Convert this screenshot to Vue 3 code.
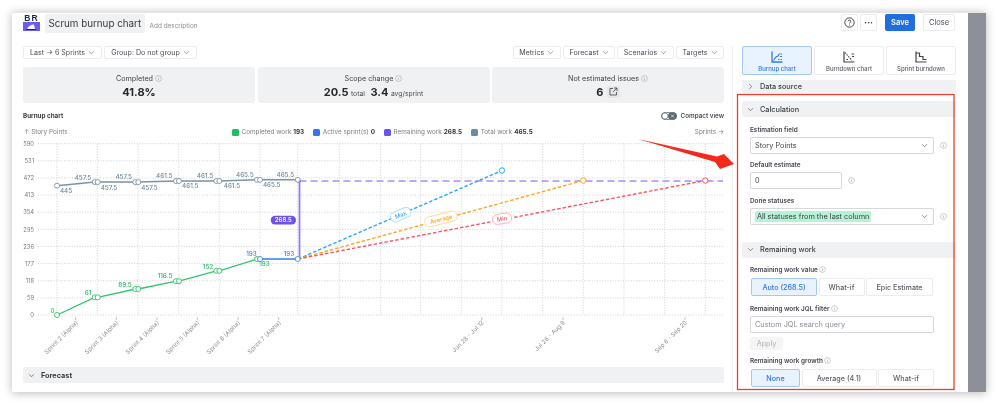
<script setup>
const leftButtons = [{ t: 'Last → 6 Sprints', w: 79 }, { t: 'Group: Do not group', w: 93 }]
const rightButtons = [{ t: 'Metrics', w: 48.5 }, { t: 'Forecast', w: 52 }, { t: 'Scenarios', w: 57 }, { t: 'Targets', w: 48 }]
const legend = [
  { label: 'Completed work', value: '193', color: '#22bd63' },
  { label: 'Active sprint(s)', value: '0', color: '#2f78e8' },
  { label: 'Remaining work', value: '268.5', color: '#6e4ff0' },
  { label: 'Total work', value: '465.5', color: '#6f8a9c' }
]
const yAxis = [590, 531, 472, 413, 354, 295, 236, 177, 118, 59, 0].map((v, i) => ({ v, y: 143.7 + i * 17.13 }))
const gridX = [57, 97.3, 138, 178.7, 219.3, 260, 297.7, 339.3, 380.7, 420.7, 461.3, 502, 542.7, 583.3, 624, 664.7, 705.3]
const sprintTicks = [
  { x: 75.7, t: 'Sprint 2 (Alpha)' }, { x: 116.3, t: 'Sprint 3 (Alpha)' }, { x: 157, t: 'Sprint 4 (Alpha)' },
  { x: 197.3, t: 'Sprint 5 (Alpha)' }, { x: 238, t: 'Sprint 6 (Alpha)' }, { x: 278.7, t: 'Sprint 7 (Alpha)' },
  { x: 481.7, t: 'Jun 28 - Jul 12' }, { x: 563, t: 'Jul 26 - Aug 9' }, { x: 685, t: 'Sep 6 - Sep 20' }
]
const pairX = [97.7, 138.3, 179, 219.3, 260]
const greyY = [182.1, 182.1, 181, 181, 179.8]
const greenY = [297.3, 289, 281.2, 270.8, 259]
const greyCircles = [[57, 185.7], ...pairX.flatMap((x, i) => [[x - 3, greyY[i]], [x, greyY[i]]]), [297.7, 179.8]]
const greenCircles = [[57, 315], ...pairX.flatMap((x, i) => (i < 4 ? [[x - 3, greenY[i]], [x, greenY[i]]] : [[x - 3, greenY[i]]]))]
const greyLine = greyCircles.map(p => p.join(',')).join(' ')
const greenLine = greenCircles.map(p => p.join(',')).join(' ')
const greyLabels = [
  [83, 177.5, '457.5'], [123.7, 177, '457.5'], [164.3, 176, '461.5'], [205, 176, '461.5'], [244.8, 174.7, '465.5'], [285.3, 174.7, '465.5'],
  [66, 191, '445'], [109, 187.3, '457.5'], [149.5, 187.3, '457.5'], [190.3, 186, '461.5'], [232, 186, '461.5'], [271.7, 184.7, '465.5']
]
const greenLabels = [[52.5, 310.5, '0'], [88, 292.3, '61'], [125, 284.5, '89.5'], [165, 276, '116.5'], [208, 266.3, '152'], [264.5, 264, '193']]
const forecasts = [
  { x: 502, y: 170.5, color: '#28a7ff', soft: '#a6dcff', label: 'Max', lx: 400.7, ly: 214.7, w: 21, rot: -23 },
  { x: 583.3, y: 180.5, color: '#ffa51f', soft: '#ffd79a', label: 'Average', lx: 441, ly: 219, w: 33, rot: -14 },
  { x: 705.3, y: 180.5, color: '#fb5560', soft: '#ffb0b4', label: 'Min', lx: 502, ly: 218.7, w: 19, rot: -9 }
]
</script>

<template>
  <div class="page">
    <svg class="defs" width="0" height="0" aria-hidden="true">
      <symbol id="chev" viewBox="0 0 10 10"><path d="M1.5 3.2 5 6.8l3.5-3.6" fill="none" stroke="currentColor" stroke-width="1"/></symbol>
      <symbol id="info" viewBox="0 0 10 10"><circle cx="5" cy="5" r="4.2" fill="none" stroke="currentColor" stroke-width=".8"/><path d="M5 4.3v3M5 2.6v.9" stroke="currentColor" stroke-width=".9"/></symbol>
    </svg>

    <div class="window">
      <div class="main">
        <header class="top">
          <div class="logo">
            <span class="logo-text">BR</span>
            <svg class="logo-mark" viewBox="0 0 17 9"><rect width="17" height="9" fill="#6a5cf0"/><path d="M4 7c1-2.500 4-4.500 7-4.500l1 4.500z" fill="#fff"/><rect x="3" y="7" width="10" height="1" fill="#1e2a55"/></svg>
          </div>
          <h1 class="title">Scrum burnup chart</h1>
          <span class="desc">Add description</span>
          <div class="top-actions">
            <button class="icon-btn">
              <svg width="11" height="11" viewBox="0 0 11 11"><circle cx="5.500" cy="5.500" r="4.700" fill="none" stroke="#333" stroke-width=".9"/><path d="M4.200 4.300c0-1.700 2.700-1.700 2.700 0 0 1-1.300 1-1.300 2.100" fill="none" stroke="#333" stroke-width=".9"/><circle cx="5.600" cy="8" r=".55" fill="#333"/></svg>
            </button>
            <button class="icon-btn dots">···</button>
            <button class="save">Save</button>
            <button class="close">Close</button>
          </div>
        </header>

        <div class="body">
          <section class="left">
            <div class="toolbar">
              <button v-for="b in leftButtons" :key="b.t" class="tool" :style="{ width: b.w + 'px' }">{{ b.t }}<svg class="chev"><use href="#chev"/></svg></button>
              <span class="spacer"></span>
              <button v-for="b in rightButtons" :key="b.t" class="tool" :style="{ width: b.w + 'px' }">{{ b.t }}<svg class="chev"><use href="#chev"/></svg></button>
            </div>

            <div class="kpis">
              <div class="kpi">
                <div class="kpi-label">Completed <svg class="info"><use href="#info"/></svg></div>
                <div class="kpi-value"><b>41.8%</b></div>
              </div>
              <div class="kpi">
                <div class="kpi-label">Scope change <svg class="info"><use href="#info"/></svg></div>
                <div class="kpi-value"><b>20.5</b> <small>total</small> <b class="second">3.4</b> <small>avg/sprint</small></div>
              </div>
              <div class="kpi">
                <div class="kpi-label">Not estimated issues <svg class="info"><use href="#info"/></svg></div>
                <div class="kpi-value">
                  <b>6</b>
                  <span class="open">
                    <svg width="9" height="9" viewBox="0 0 9 9"><path d="M4 1.500H1v6.500h6.500V5M5 1h3v3M8 1 4 5" fill="none" stroke="#444" stroke-width=".8"/></svg>
                  </span>
                </div>
              </div>
            </div>

            <div class="chart-head">
              <span class="chart-title">Burnup chart</span>
              <span class="compact">
                <svg width="16" height="8" viewBox="0 0 16 8"><rect x=".4" y=".4" width="15.200" height="7.200" rx="3.600" fill="#fff" stroke="#5d6470" stroke-width=".8"/><rect x="7" y=".4" width="8.600" height="7.200" rx="3.600" fill="#5d6470"/><circle cx="4" cy="4" r="3" fill="#fff" stroke="#5d6470" stroke-width=".6"/><path d="m10 2.500 3 3m0-3-3 3" stroke="#fff" stroke-width=".7"/></svg>
                Compact view
              </span>
            </div>

            <div class="axis-row">
              <span class="axis-left">↑ Story Points</span>
              <span v-for="l in legend" :key="l.label" class="legend">
                <i :style="{ background: l.color }"></i>{{ l.label }} <b>{{ l.value }}</b>
              </span>
              <span class="axis-right">Sprints →</span>
            </div>

            <svg class="chart" viewBox="12 139 712 228" width="712" height="228">
              <g class="grid">
                <line v-for="a in yAxis" :key="a.v" x1="38" x2="724" :y1="a.y" :y2="a.y"/>
                <line v-for="x in gridX" :key="x" :x1="x" :x2="x" y1="143.700" y2="315"/>
              </g>
              <text v-for="a in yAxis" :key="'y' + a.v" class="ylab" x="34" :y="a.y + 2.200">{{ a.v }}</text>

              <g v-for="t in sprintTicks" :key="t.t">
                <line class="tick" :x1="t.x" :x2="t.x" y1="317" y2="320"/>
                <text class="xlab" :transform="`translate(${t.x + 2.5} 323) rotate(-45)`">{{ t.t }}</text>
              </g>

              <polyline :points="greyLine" fill="none" stroke="#7c93a3" stroke-width="1.500"/>
              <polyline :points="greenLine" fill="none" stroke="#33c46c" stroke-width="1.300"/>
              <line x1="260" x2="297.700" y1="259" y2="259" stroke="#639ff2" stroke-width="2"/>

              <line x1="299.500" x2="723" y1="181" y2="181" stroke="#a58df8" stroke-width="1.600" stroke-dasharray="7 4"/>
              <line x1="299.500" x2="299.500" y1="181" y2="258" stroke="#8f7df5" stroke-width="1.800"/>
              <circle cx="299.300" cy="181" r="1.500" fill="#6e4ff0"/>

              <g v-for="f in forecasts" :key="f.label">
                <line x1="298" y1="259" :x2="f.x" :y2="f.y" :stroke="f.color" stroke-width="1.400" stroke-dasharray="3.500 2"/>
                <circle :cx="f.x" :cy="f.y" r="2.700" fill="#fff" :stroke="f.color" stroke-width="1"/>
                <g :transform="`translate(${f.lx} ${f.ly}) rotate(${f.rot})`">
                  <rect :x="-f.w / 2" y="-5" :width="f.w" height="10" rx="4.500" fill="#fff" :stroke="f.soft" stroke-width=".9"/>
                  <text class="fc-label" :fill="f.color" y="2.200">{{ f.label }}</text>
                </g>
              </g>

              <circle v-for="(c, i) in greyCircles" :key="'g' + i" :cx="c[0]" :cy="c[1]" r="2.500" fill="#fff" stroke="#7c93a3" stroke-width=".9"/>
              <circle v-for="(c, i) in greenCircles" :key="'n' + i" :cx="c[0]" :cy="c[1]" r="2.500" fill="#fff" stroke="#2fbe66" stroke-width=".9"/>
              <circle cx="260" cy="259" r="2.500" fill="#fff" stroke="#3f86ee" stroke-width=".9"/>
              <circle cx="297.700" cy="259" r="2.500" fill="#fff" stroke="#3f86ee" stroke-width=".9"/>

              <text v-for="(l, i) in greyLabels" :key="'gl' + i" class="pt grey" :x="l[0]" :y="l[1] + 2.200">{{ l[2] }}</text>
              <text v-for="(l, i) in greenLabels" :key="'nl' + i" class="pt green" :x="l[0]" :y="l[1] + 2.200">{{ l[2] }}</text>
              <text class="pt blue" x="251.500" y="256.200">193</text>
              <text class="pt blue" x="289" y="256.200">193</text>

              <rect x="270.700" y="215.700" width="25.300" height="8.800" rx="4.400" fill="#6e4ff0"/>
              <text class="badge" x="283.300" y="222.300">268.5</text>
            </svg>

            <div class="acc forecast"><svg class="chev dark"><use href="#chev"/></svg>Forecast</div>
          </section>

          <aside class="right">
            <div class="tabs">
              <button class="tab active">
                <svg width="12" height="12" viewBox="0 0 12 12" fill="none" stroke="#2f78e8"><path d="M1 .5V11h10.500" stroke-width="1.300"/><path d="m2.500 9.500 2.500-3.500 2-1 1.500-2.500" stroke-width="1.100"/><path d="M7 8.500h1.500M9.500 8.500H11M9 5.500h2M9.500 3H11" stroke-width="1.100"/></svg>
                Burnup chart
              </button>
              <button class="tab">
                <svg width="12" height="12" viewBox="0 0 12 12" fill="none" stroke="#444"><path d="M1 .5V11h10.500" stroke-width="1.200"/><path d="m2 1.500 7 8" stroke-width="1.100" stroke-dasharray="1.500 1"/><path d="M8.500 3H11M9 5.500h2M3.500 8.500H5" stroke-width="1"/></svg>
                Burndown chart
              </button>
              <button class="tab">
                <svg width="12" height="12" viewBox="0 0 12 12" fill="none" stroke="#444"><path d="M1 .5V11h10.500" stroke-width="1.200"/><path d="M1 2h3.500v3.500H8V8.500h3.500" stroke-width="1.200"/></svg>
                Sprint burndown
              </button>
            </div>

            <div class="acc source"><svg class="chev dark closed"><use href="#chev"/></svg>Data source</div>

            <div class="acc calc"><svg class="chev dark"><use href="#chev"/></svg>Calculation</div>
            <div class="fields">
              <label class="lab">Estimation field</label>
              <div class="line">
                <div class="select">Story Points<svg class="chev dark"><use href="#chev"/></svg></div>
                <svg class="info"><use href="#info"/></svg>
              </div>
              <label class="lab">Default estimate</label>
              <div class="line">
                <div class="select short">0</div>
                <svg class="info"><use href="#info"/></svg>
              </div>
              <label class="lab">Done statuses</label>
              <div class="line">
                <div class="select thin"><span class="tag">All statuses from the last column</span><svg class="chev dark"><use href="#chev"/></svg></div>
                <svg class="info"><use href="#info"/></svg>
              </div>
            </div>

            <div class="acc remain"><svg class="chev dark"><use href="#chev"/></svg>Remaining work</div>
            <div class="fields">
              <label class="lab">Remaining work value <svg class="info"><use href="#info"/></svg></label>
              <div class="seg">
                <button class="on w66">Auto (268.5)</button>
                <button class="w46">What-if</button>
                <button class="w67">Epic Estimate</button>
              </div>
              <label class="lab jql">Remaining work JQL filter <svg class="info"><use href="#info"/></svg></label>
              <div class="select query">Custom JQL search query</div>
              <button class="apply">Apply</button>
              <label class="lab growth">Remaining work growth <svg class="info"><use href="#info"/></svg></label>
              <div class="seg">
                <button class="on w49">None</button>
                <button class="w75">Average (4.1)</button>
                <button class="w56">What-if</button>
              </div>
            </div>
          </aside>
        </div>
      </div>
      <div class="strip"></div>
    </div>

    <svg class="annotation" viewBox="0 0 998 404" width="998" height="404">
      <rect x="737.500" y="94.500" width="216.500" height="295" fill="none" stroke="#f23b2c" stroke-width="1.300"/>
      <polygon points="638,139 717,156.500 724,154 734,164 720,169 715,162" fill="#f5281c"/>
    </svg>
  </div>
</template>

<style scoped>
.page {
  position: relative;
  width: 998px;
  height: 404px;
  padding: 12px 12px 0;
  box-sizing: border-box;
  overflow: hidden;
  background: #fff;
  font-family: Inter, "Liberation Sans", sans-serif;
  color: #3a3d44;
  filter: blur(.3px);
}
button { font-family: inherit; cursor: pointer; padding: 0; }
.defs { position: absolute; }
.window {
  display: flex;
  width: 974px;
  height: 379px;
  background: #fff;
  border-top: 1px solid #e6e6e6;
  box-shadow: 0 1px 9px rgba(0, 0, 0, .28);
}
.main { width: 956px; display: flex; flex-direction: column; overflow: hidden; }
.strip { width: 18px; background: #8d9099; }

.top { display: flex; align-items: flex-start; height: 33px; padding: 1px 13px 0 11px; box-sizing: border-box; flex: none; }
.logo { width: 17px; margin-right: 5px; display: flex; flex-direction: column; align-items: center; }
.logo-text { font: bold 8.500px/8px "Liberation Sans", sans-serif; letter-spacing: 1px; color: #1f2a52; }
.logo-mark { width: 17px; height: 9px; display: block; }
.title { margin: 0; height: 19px; padding: 0 3.500px; background: #f0f1f3; border-radius: 2px; font-size: 9.800px; font-weight: 400; line-height: 19px; color: #34373d; white-space: nowrap; }
.desc { margin: 8px 0 0 5px; font-size: 6.400px; line-height: 9px; color: #8a8e96; white-space: nowrap; }
.top-actions { margin-left: auto; display: flex; }
.icon-btn { width: 17px; height: 17px; margin-right: 2px; display: flex; align-items: center; justify-content: center; background: #fff; border: 1px solid #ececef; border-radius: 2px; color: #333; font-size: 9px; font-weight: 700; line-height: 1; }
.dots { margin-right: 8px; }
.save { width: 30px; height: 17px; background: #1e6ee0; border: 0; border-radius: 2px; color: #fff; font-size: 7.500px; font-weight: 600; margin-right: 8px; }
.close { width: 32px; height: 17px; background: #fff; border: 1px solid #ececef; border-radius: 2px; color: #4a4d55; font-size: 7.500px; }

.body { display: flex; flex: 1; min-height: 0; }
.left { width: 701px; margin-left: 11px; flex: none; display: flex; flex-direction: column; }
.right { width: 214px; margin-left: 8px; padding-left: 9px; border-left: 1px solid #edf0f5; flex: none; overflow: hidden; }

.toolbar { display: flex; gap: 2px; height: 13px; }
.spacer { flex: 1; }
.tool { height: 13px; display: flex; align-items: center; justify-content: center; gap: 3px; flex: none; background: #fff; border: 1px solid #ececef; border-radius: 2px; color: #4a4d55; font-size: 7.100px; white-space: nowrap; }
.chev { width: 7px; height: 7px; color: #777b84; flex: none; }
.chev.dark { color: #555962; }
.closed { transform: rotate(-90deg); }

.kpis { display: grid; grid-template-columns: 232px 232px 232px; gap: 2.500px; margin-top: 8px; }
.kpi { height: 36px; background: #f0f1f3; border-radius: 3px; text-align: center; box-sizing: border-box; padding-top: 6.500px; }
.kpi-label { font-size: 7.200px; line-height: 9px; color: #3f4248; }
.info { width: 7px; height: 7px; color: #a3a7ae; vertical-align: -1px; flex: none; }
.kpi-value { margin-top: 2px; height: 14px; display: flex; justify-content: center; align-items: baseline; gap: 2.500px; font-size: 7px; line-height: 14px; }
.kpi-value b { font-size: 11px; font-weight: 700; color: #26282d; }
.kpi-value small { font-size: 6.800px; color: #4a4d55; }
.kpi-value .second { margin-left: 3px; }
.open { width: 13px; height: 12px; align-self: center; margin-left: 1px; display: flex; align-items: center; justify-content: center; background: #e6e7e9; border-radius: 2px; }

.chart-head { display: flex; justify-content: space-between; align-items: center; height: 8px; margin-top: 9px; }
.chart-title { font-size: 6.300px; font-weight: 700; color: #3a3d44; }
.compact { display: flex; align-items: center; gap: 4px; font-size: 6.300px; font-weight: 600; color: #4c4f57; }

.axis-row { display: flex; align-items: center; height: 9px; margin-top: 7.500px; font-size: 6.400px; color: #7d818a; white-space: nowrap; }
.axis-left { width: 209px; padding-left: 1px; box-sizing: border-box; }
.axis-right { margin-left: auto; }
.legend { display: flex; align-items: center; margin-right: 9px; gap: 2.500px; }
.legend i { width: 7px; height: 7px; border-radius: 1.500px; }
.legend b { color: #33363c; font-weight: 700; margin-left: -.5px; }

.chart { display: block; margin: 2.500px 0 0 -11px; flex: none; overflow: visible; }
.grid line { stroke: #d2d2d6; stroke-width: 1; stroke-dasharray: 1 1.600; }
.ylab { font-size: 5.800px; fill: #777b84; text-anchor: end; }
.xlab { font-size: 6px; fill: #8c9098; text-anchor: end; }
.tick { stroke: #a9acb2; stroke-width: .7; }
.pt { font-size: 6.300px; text-anchor: middle; font-weight: 500; }
.grey { fill: #6f8a9c; }
.green { fill: #2fb866; }
.blue { fill: #3f86ee; }
.fc-label { font-size: 5.800px; font-weight: 500; text-anchor: middle; }
.badge { font-size: 6px; font-weight: 600; fill: #fff; text-anchor: middle; }

.acc { display: flex; align-items: center; gap: 6px; height: 16px; padding-left: 5px; background: #f0f1f3; border-radius: 2px; font-size: 7.300px; font-weight: 500; color: #3a3d44; flex: none; }
.forecast { font-weight: 700; }

.tabs { display: grid; grid-template-columns: repeat(3, 70px); gap: 2px; }
.tab { height: 29px; display: flex; flex-direction: column; align-items: center; justify-content: flex-start; padding-top: 3.500px; gap: 2px; background: #fff; border: 1px solid #ececef; border-radius: 2px; color: #5c6068; font-size: 6px; font-weight: 500; box-sizing: border-box; }
.tab.active { background: #e9f2ff; border-color: #a4c8f6; color: #2f78e8; }
.source { height: 13px; margin-top: 5px; }
.calc { margin-top: 8px; width: 212px; }
.remain { width: 212px; margin-top: 17.300px; }
.fields { padding-left: 8px; }
.lab { display: block; height: 9px; font-size: 6.400px; font-weight: 600; line-height: 9px; color: #45484f; white-space: nowrap; margin-top: 7.500px; }
.fields > .lab:first-child { margin-top: 8.500px; }
.line { display: flex; align-items: center; gap: 6px; margin-top: 2px; }
.select { width: 184px; height: 17px; padding: 0 5px 0 4px; display: flex; align-items: center; justify-content: space-between; box-sizing: border-box; background: #fff; border: 1px solid #d6d8dc; border-radius: 2px; font-size: 7.300px; color: #43464d; white-space: nowrap; }
.short { width: 92px; }
.tag { height: 11px; padding: 0 2px; line-height: 11px; background: #b8f2d6; border-radius: 1.500px; color: #3a3d44; }
.seg { display: flex; gap: 1.500px; margin: 3px 0 0 1px; }
.seg button { height: 17.500px; background: #fff; border: 1px solid #ececef; border-radius: 2px; color: #5a5e66; font-size: 7.200px; font-weight: 500; white-space: nowrap; }
.seg button.on { background: #e9f2ff; border-color: #a4c8f6; color: #2f78e8; }
.w66 { width: 66px; } .w46 { width: 46px; } .w67 { width: 67px; }
.w49 { width: 49px; } .w75 { width: 75px; } .w56 { width: 56px; }
.fields > .jql { margin-top: 8.800px; }
.query { margin-top: 2.500px; color: #8b8f97; }
.apply { display: block; width: 33px; height: 13px; margin-top: 3.700px; background: #f5f5f6; border: 0; border-radius: 2px; color: #aeb1b7; font-size: 7.200px; }
.fields > .growth { margin-top: 7.500px; }

.annotation { position: absolute; left: 0; top: 0; pointer-events: none; }
</style>
